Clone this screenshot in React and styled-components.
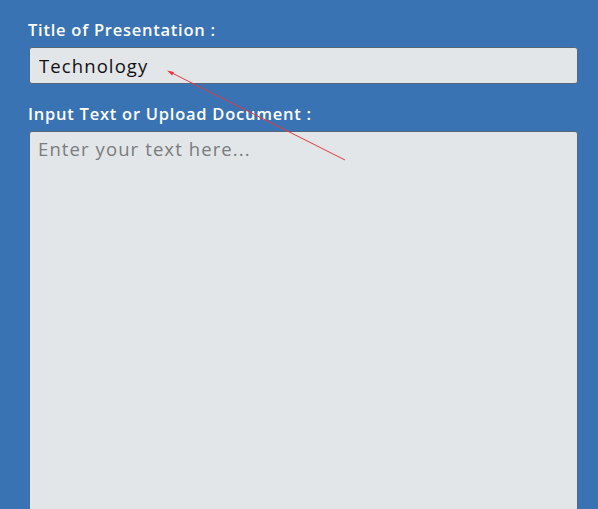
import React from "react";
import styled, { createGlobalStyle } from "styled-components";

const Global = createGlobalStyle`
  html, body { margin: 0; padding: 0; background: #3973b3; overflow: hidden; }
  body { font-family: "Open Sans", "Liberation Sans", sans-serif; }
`;

const Page = styled.div`
  position: relative;
  width: 598px;
  height: 509px;
  background: #3973b3;
  padding: 19px 20px 0 29px;
  box-sizing: border-box;
  display: flex;
  flex-direction: column;
  overflow: hidden;
`;

const Label = styled.label`
  display: block;
  flex-shrink: 0;
  color: #ffffff;
  font-family: "Open Sans", sans-serif;
  font-weight: 600;
  font-size: 16.5px;
  letter-spacing: 0.75px;
  line-height: 22px;
  margin-left: -1px;
  margin-bottom: ${(p) => p.$gap}px;
`;

const fieldBase = `
  box-sizing: border-box;
  flex-shrink: 0;
  width: 549px;
  background: #e2e6e9;
  border: 1px solid #56677d;
  border-radius: 3px;
  font-family: "Open Sans", sans-serif;
  font-size: 18.5px;
  letter-spacing: 1.1px;
  outline: none;
`;

const TextInput = styled.input`
  ${fieldBase}
  height: 37px;
  padding: 0 0 0 9px;
  color: #111;
  margin-bottom: 19px;
`;

const TextArea = styled.textarea`
  ${fieldBase}
  height: 420px;
  padding: 4px 8px;
  resize: none;
  color: #111;
  &::placeholder { color: #7a7c7e; }
`;

const Overlay = styled.svg`
  position: absolute;
  left: 0;
  top: 0;
  pointer-events: none;
`;

export default function App() {
  return (
    <>
      <Global />
      <Page>
        <Label $gap={6}>Title of Presentation :</Label>
        <TextInput defaultValue="Technology" />
        <Label $gap={6}>Input Text or Upload Document :</Label>
        <TextArea placeholder="Enter your text here..." />
        <Overlay width="598" height="509">
          <line x1="345" y1="160" x2="170" y2="72" stroke="#e8383d" strokeWidth="1" />
          <polygon points="167,70.5 174,72 172,75.5" fill="#e8383d" />
        </Overlay>
      </Page>
    </>
  );
}
